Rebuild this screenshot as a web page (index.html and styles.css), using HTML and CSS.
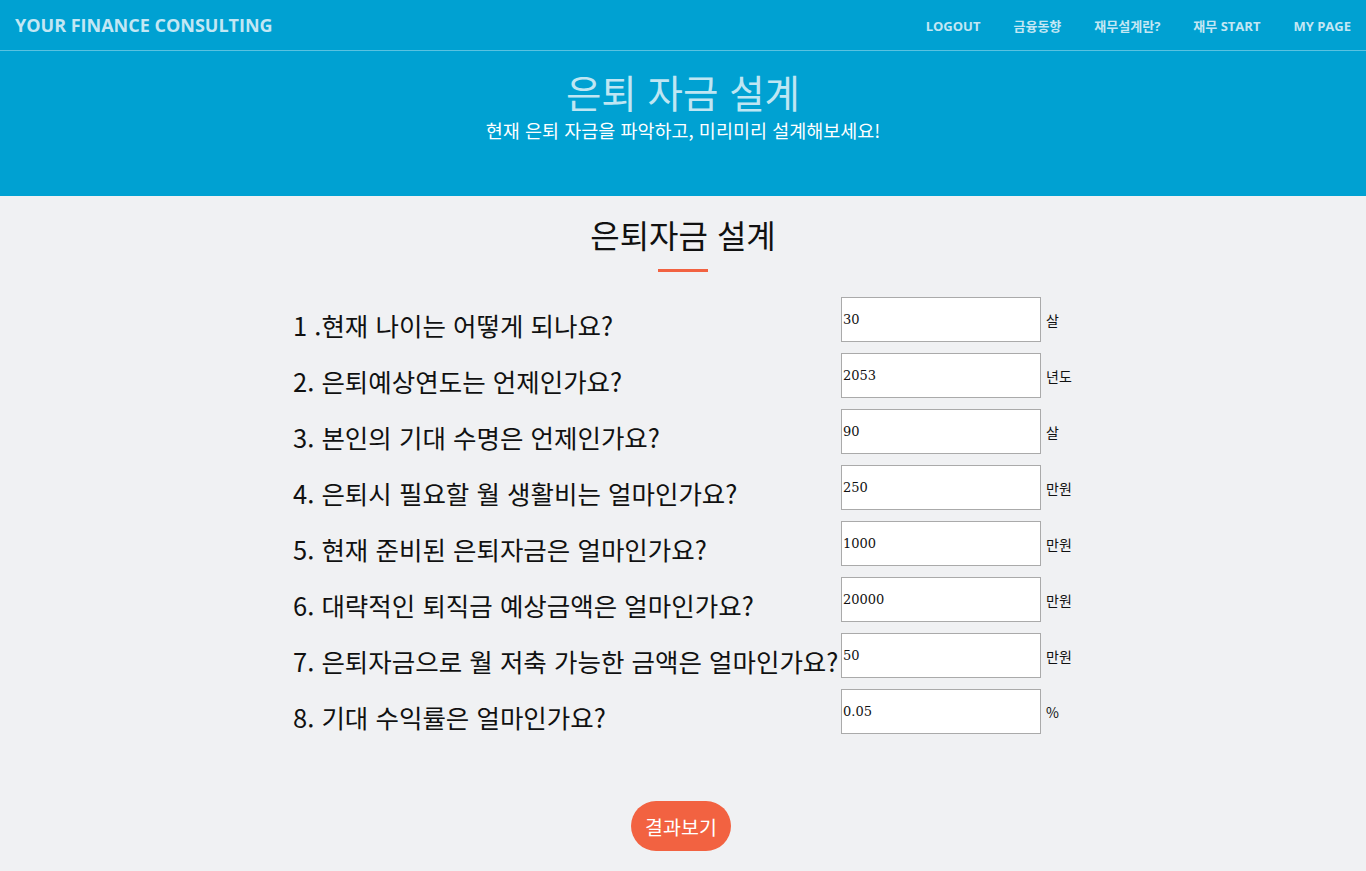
FILE: index.html
```html
<!DOCTYPE html>
<html lang="ko">
<head>
<meta charset="utf-8">
<title>은퇴 자금 설계</title>
<link rel="stylesheet" href="styles.css">
</head>
<body>
<nav class="navbar">
  <a class="brand" href="#">YOUR FINANCE CONSULTING</a>
  <ul class="menu">
    <li><a href="#">LOGOUT</a></li>
    <li><a href="#">금융동향</a></li>
    <li><a href="#">재무설계란?</a></li>
    <li><a href="#">재무 START</a></li>
    <li><a href="#">MY PAGE</a></li>
  </ul>
</nav>
<header class="hero">
  <h1 class="hero-title">은퇴 자금 설계</h1>
  <p class="hero-sub">현재 은퇴 자금을 파악하고, 미리미리 설계해보세요!</p>
</header>
<main class="content">
  <h2 class="section-title">은퇴자금 설계</h2>
  <div class="divider"></div>
  <form class="plan">
    <div class="row"><label class="q">1 .현재 나이는 어떻게 되나요?</label><input class="field" type="text" value="30"><span class="unit">살</span></div>
    <div class="row"><label class="q">2. 은퇴예상연도는 언제인가요?</label><input class="field" type="text" value="2053"><span class="unit">년도</span></div>
    <div class="row"><label class="q">3. 본인의 기대 수명은 언제인가요?</label><input class="field" type="text" value="90"><span class="unit">살</span></div>
    <div class="row"><label class="q">4. 은퇴시 필요할 월 생활비는 얼마인가요?</label><input class="field" type="text" value="250"><span class="unit">만원</span></div>
    <div class="row"><label class="q">5. 현재 준비된 은퇴자금은 얼마인가요?</label><input class="field" type="text" value="1000"><span class="unit">만원</span></div>
    <div class="row"><label class="q">6. 대략적인 퇴직금 예상금액은 얼마인가요?</label><input class="field" type="text" value="20000"><span class="unit">만원</span></div>
    <div class="row"><label class="q">7. 은퇴자금으로 월 저축 가능한 금액은 얼마인가요?</label><input class="field" type="text" value="50"><span class="unit">만원</span></div>
    <div class="row"><label class="q">8. 기대 수익률은 얼마인가요?</label><input class="field" type="text" value="0.05"><span class="unit">%</span></div>
    <div class="actions"><button class="btn" type="button">결과보기</button></div>
  </form>
</main>
</body>
</html>
```
FILE: styles.css
```css
* { box-sizing: border-box; }
html, body { margin: 0; padding: 0; }
body {
  background: #f0f1f3;
  font-family: "Open Sans", "Noto Sans CJK KR", sans-serif;
  color: #111;
}
a { text-decoration: none; color: inherit; }

.navbar {
  height: 51px;
  background: #00a1d2;
  border-bottom: 1px solid rgba(255,255,255,0.35);
  display: flex;
  align-items: center;
  justify-content: space-between;
  padding: 0 15px;
}
.brand {
  font-weight: 700;
  font-size: 18px;
  color: #c3e7f4;
}
.menu {
  list-style: none;
  margin: 0;
  padding: 0;
  display: flex;
  gap: 33px;
}
.menu a {
  font-weight: 700;
  font-size: 13px;
  color: #c3e7f4;
}

.hero {
  background: #00a1d2;
  height: 145px;
  padding-top: 17px;
  text-align: center;
}
.hero-title {
  margin: 0;
  font-weight: 400;
  font-size: 38.5px;
  line-height: 46px;
  color: #bfe6f3;
  font-family: "Noto Sans CJK KR", sans-serif;
}
.hero-sub {
  margin: 4px 0 0;
  font-size: 18.5px;
  line-height: 24px;
  color: #ffffff;
  font-family: "Noto Sans CJK KR", sans-serif;
}

.content {
  width: 780px;
  margin: 0 auto;
  padding-top: 19px;
}
.section-title {
  margin: 0;
  text-align: center;
  font-weight: 400;
  font-size: 32px;
  line-height: 38px;
  color: #111;
  font-family: "Noto Sans CJK KR", sans-serif;
}
.divider {
  width: 50px;
  height: 3px;
  background: #f26241;
  margin: 16px auto 25px;
}
.plan {
  display: flex;
  flex-direction: column;
  gap: 11px;
}
.row {
  display: flex;
  align-items: flex-end;
}
.q {
  width: 548px;
  flex: none;
  font-size: 25.5px;
  line-height: 34px;
  white-space: nowrap;
  font-family: "Noto Sans CJK KR", sans-serif;
  color: #111;
}
.field {
  width: 200px;
  height: 45px;
  flex: none;
  border: 1px solid #aaaaaa;
  background: #fff;
  padding: 0 1px;
  margin: 0;
  font-family: "DejaVu Serif", "Liberation Serif", serif;
  font-size: 13px;
  color: #111;
  outline: none;
}
.unit {
  align-self: center;
  margin-left: 5px;
  font-size: 14px;
  font-family: "Noto Sans CJK KR", sans-serif;
  color: #111;
}
.actions {
  display: flex;
  justify-content: center;
  margin-top: 56px;
  padding-right: 4px;
}
.btn {
  width: 100px;
  height: 50px;
  border: none;
  border-radius: 25px;
  background: #f26241;
  color: #fff;
  font-size: 19.5px;
  font-family: "Noto Sans CJK KR", sans-serif;
  cursor: pointer;
}
```
